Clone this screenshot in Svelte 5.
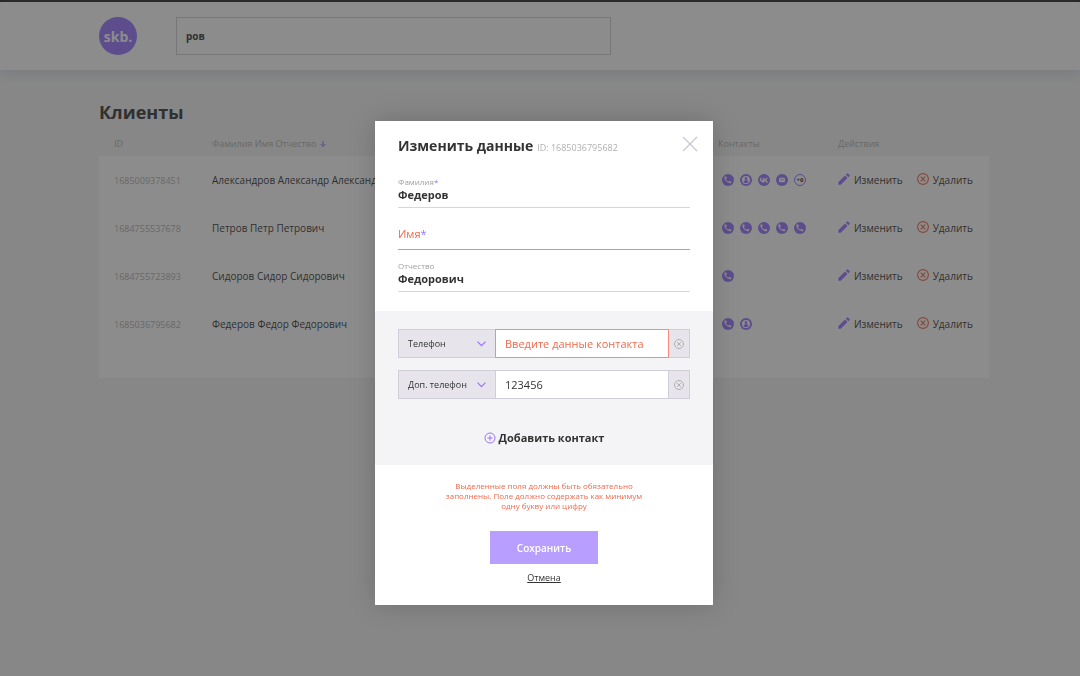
<script>
  let query = $state('ров');
  let surname = $state('Федеров');
  let firstName = $state('');
  let patronymic = $state('Федорович');

  const contactTypes = ['Телефон', 'Доп. телефон', 'Email', 'Vk'];
  let contacts = $state([
    { id: 1, type: 'Телефон', value: '' },
    { id: 2, type: 'Доп. телефон', value: '123456' }
  ]);

  const clients = [
    { id: '1685009378451', name: 'Александров Александр Александрович', contacts: ['phone', 'user', 'vk', 'mail'], more: '+6' },
    { id: '1684755537678', name: 'Петров Петр Петрович', contacts: ['phone', 'phone', 'phone', 'phone', 'phone'] },
    { id: '1684755723893', name: 'Сидоров Сидор Сидорович', contacts: ['phone'] },
    { id: '1685036795682', name: 'Федеров Федор Федорович', contacts: ['phone', 'user'] }
  ];
</script>

{#snippet contactIcon(kind)}
  <svg class="contact-icon" viewBox="0 0 16 16" aria-hidden="true">
    {#if kind === 'phone'}
      <circle cx="8" cy="8" r="8" fill="#9873ff" />
      <path fill="#fff" d="M11.56 9.5c-.62 0-1.21-.1-1.77-.28a.5.5 0 0 0-.5.12l-.79.99a7.5 7.5 0 0 1-3.43-3.4l.98-.83a.5.5 0 0 0 .12-.5A5.6 5.6 0 0 1 5.9 3.83.5.5 0 0 0 5.4 3.33H3.66c-.27 0-.6.12-.6.5 0 4.6 3.83 8.4 8.4 8.4.35 0 .6-.31.6-.59V10a.5.5 0 0 0-.5-.5Z" />
    {:else if kind === 'user'}
      <circle cx="8" cy="8" r="8" fill="#9873ff" />
      <circle cx="8" cy="8" r="5.4" fill="#fff" />
      <circle cx="8" cy="6.2" r="1.8" fill="#9873ff" />
      <path fill="#9873ff" d="M4.700 10.300c0-1.300 2.200-1.900 3.300-1.900s3.300.6 3.300 1.900c-.7 1-1.900 1.700-3.300 1.700s-2.600-.7-3.300-1.700Z" />
    {:else if kind === 'vk'}
      <circle cx="8" cy="8" r="8" fill="#9873ff" />
      <path fill="#fff" d="M7.900 11.500C4.400 11.500 2.300 9 2.200 4.900h2c.1 2.600 1.200 3.600 2.100 3.900V4.900h2.200v2.300c1-.1 2-1.200 2.300-2.300h2c-.3 1.500-1.300 2.500-2 3 .7.400 1.900 1.300 2.400 3.600h-2.200c-.4-1.100-1.300-2-2.500-2.200v2.200h-.6Z" />
    {:else}
      <circle cx="8" cy="8" r="8" fill="#9873ff" />
      <path fill="#fff" fill-rule="evenodd" d="M5 5h6c.6 0 1 .4 1 1v4c0 .6-.4 1-1 1H5c-.6 0-1-.4-1-1V6c0-.6.4-1 1-1Zm0 1v.7l3 1.800 3-1.800V6L8 7.600 5 6Z" />
    {/if}
  </svg>
{/snippet}

{#snippet crossCircle(cls)}
  <svg class={cls} viewBox="0 0 12 12" aria-hidden="true">
    <circle cx="6" cy="6" r="5.400" />
    <path d="m3.700 3.700 4.600 4.600m0-4.600L3.700 8.300" />
  </svg>
{/snippet}

<div class="page">
  <header class="header">
    <a class="logo" href="#top">skb.</a>
    <input class="search" type="text" aria-label="Поиск" bind:value={query} />
  </header>

  <main class="main">
    <h1>Клиенты</h1>
    <div class="table-wrap">
      <table>
        <colgroup>
          <col class="col-id" />
          <col />
          <col class="col-contacts" />
          <col class="col-actions" />
        </colgroup>
        <thead>
          <tr>
            <th scope="col">ID</th>
            <th scope="col">
              Фамилия Имя Отчество
              <svg class="sort" viewBox="0 0 8 8" aria-hidden="true"><path d="M4 1v5.500M1.500 4 4 6.500 6.500 4" /></svg>
            </th>
            <th scope="col">Контакты</th>
            <th scope="col">Действия</th>
          </tr>
        </thead>
        <tbody>
          {#each clients as client (client.id)}
            <tr>
              <td class="id">{client.id}</td>
              <td class="name">{client.name}</td>
              <td>
                <div class="contacts">
                  {#each client.contacts as kind}
                    {@render contactIcon(kind)}
                  {/each}
                  {#if client.more}
                    <button class="more" type="button">{client.more}</button>
                  {/if}
                </div>
              </td>
              <td>
                <div class="actions">
                  <button class="action" type="button">
                    <svg class="pencil" viewBox="0 0 12 12" aria-hidden="true">
                      <path d="M.3 9.200v2.500h2.500l6.700-6.700L7 2.500.3 9.200ZM11.600 2.900a.6.6 0 0 0 0-.9L10 .4a.6.6 0 0 0-.9 0L7.800 1.700l2.500 2.500 1.300-1.300Z" />
                    </svg>
                    <span>Изменить</span>
                  </button>
                  <button class="action" type="button">
                    {@render crossCircle('cancel')}
                    <span>Удалить</span>
                  </button>
                </div>
              </td>
            </tr>
          {/each}
        </tbody>
      </table>
    </div>
  </main>
</div>

<div class="overlay">
  <form class="modal" aria-labelledby="modal-title" onsubmit={(e) => e.preventDefault()}>
    <div class="modal-head">
      <h2 id="modal-title">Изменить данные</h2>
      <span class="modal-id">ID: 1685036795682</span>
      <button class="close" type="button" aria-label="Закрыть">
        <svg viewBox="0 0 16 16" aria-hidden="true"><path d="m1 1 14 14M15 1 1 15" /></svg>
      </button>
    </div>

    <div class="fields">
      <div class="field">
        <label for="surname">Фамилия<b>*</b></label>
        <input id="surname" type="text" bind:value={surname} />
      </div>
      <div class="field invalid">
        <label for="first-name">Имя<b>*</b></label>
        <input id="first-name" type="text" bind:value={firstName} />
      </div>
      <div class="field">
        <label for="patronymic">Отчество</label>
        <input id="patronymic" type="text" bind:value={patronymic} />
      </div>
    </div>

    <div class="contact-section">
      {#each contacts as contact (contact.id)}
        <div class="contact-row">
          <div class="select">
            <select aria-label="Тип контакта" bind:value={contact.type}>
              {#each contactTypes as type}
                <option value={type}>{type}</option>
              {/each}
            </select>
            <svg class="chevron" viewBox="0 0 9 6" aria-hidden="true"><path d="m.5.7 4 4 4-4" /></svg>
          </div>
          <input
            type="text"
            class:empty={!contact.value}
            aria-label="Контакт"
            placeholder="Введите данные контакта"
            bind:value={contact.value}
          />
          <button class="remove" type="button" aria-label="Удалить контакт">
            {@render crossCircle('remove-icon')}
          </button>
        </div>
      {/each}
      <button class="add" type="button">
        <svg viewBox="0 0 12 12" aria-hidden="true"><circle cx="6" cy="6" r="5" /><path d="M6 3.500v5M3.500 6h5" /></svg>
        <span>Добавить контакт</span>
      </button>
    </div>

    <div class="modal-foot">
      <p class="error">Выделенные поля должны быть обязательно заполнены. Поле должно содержать как минимум одну букву или цифру</p>
      <button class="save" type="submit">Сохранить</button>
      <button class="dismiss" type="button">Отмена</button>
    </div>
  </form>
</div>

<style>
  :global(body) {
    background: #f4f4f4;
    color: #333;
    font-family: 'Open Sans', 'Noto Sans', sans-serif;
    font-size: 10px;
  }
  :global(*) {
    box-sizing: border-box;
  }
  button,
  input,
  select {
    margin: 0;
    padding: 0;
    border: 0;
    border-radius: 0;
    background: none;
    color: inherit;
    font: inherit;
    outline: none;
  }
  button {
    cursor: pointer;
  }
  svg {
    display: block;
    flex: none;
  }
  .page {
    min-height: 100vh;
    border-top: 2px solid #1c1c1c;
  }
  .header {
    display: flex;
    align-items: center;
    gap: 39px;
    padding: 15px 91px 15px 99px;
    background: #fff;
    box-shadow: 0 4px 12px rgba(160, 176, 190, 0.4);
  }
  .logo {
    display: grid;
    place-items: center;
    width: 38px;
    height: 38px;
    border-radius: 50%;
    background: #9873ff;
    color: #fff;
    font-size: 14px;
    font-weight: 700;
    text-decoration: none;
  }
  .search {
    flex: 0 1 435px;
    min-width: 0;
    height: 38px;
    padding: 0 9px;
    border: 1px solid #d0d0d4;
    font-weight: 700;
  }
  .main {
    padding: 30px 91px 40px 99px;
  }
  h1 {
    margin: 0;
    font-size: 18px;
    line-height: 24px;
    font-weight: 700;
  }
  .table-wrap {
    margin-top: 8px;
    padding-bottom: 30px;
    background: #fff;
  }
  table {
    width: 100%;
    table-layout: fixed;
    border-collapse: collapse;
  }
  .col-id {
    width: 113px;
  }
  .col-contacts {
    width: 120px;
  }
  .col-actions {
    width: 151px;
  }
  th,
  td {
    padding: 0;
    text-align: left;
    white-space: nowrap;
  }
  th:first-child,
  td:first-child {
    padding-left: 15px;
  }
  thead {
    background: #f4f4f4;
  }
  th {
    height: 24px;
    padding-bottom: 2px;
    color: #b0b0b0;
    font-size: 9px;
    font-weight: 400;
  }
  .sort {
    display: inline-block;
    width: 8px;
    height: 8px;
    vertical-align: -1px;
    fill: none;
    stroke: #9873ff;
  }
  td {
    height: 48px;
  }
  .id {
    color: #b0b0b0;
    font-size: 9px;
  }
  .name {
    overflow: hidden;
  }
  .contacts {
    display: flex;
    gap: 6px;
    padding-left: 4px;
  }
  .contact-icon {
    width: 12px;
    height: 12px;
  }
  .more {
    display: grid;
    place-items: center;
    width: 12px;
    height: 12px;
    border: 1px solid #9873ff;
    border-radius: 50%;
    font-size: 6px;
    line-height: 8px;
    font-weight: 700;
  }
  .actions {
    display: flex;
    gap: 14px;
  }
  .action {
    display: flex;
    align-items: center;
    gap: 4px;
    line-height: 14px;
  }
  .action svg {
    width: 12px;
    height: 12px;
    margin-bottom: 3px;
  }
  .pencil {
    fill: #9873ff;
  }
  .cancel {
    fill: none;
    stroke: #f06a4d;
    stroke-width: 1.2;
  }

  .overlay {
    position: fixed;
    inset: 0;
    display: flex;
    align-items: flex-start;
    justify-content: center;
    padding: 121px 0 40px 8px;
    overflow: auto;
    background: rgba(46, 46, 46, 0.55);
  }
  .modal {
    width: 338px;
    max-width: 100%;
    background: #fff;
    box-shadow: 0 0 26px rgba(0, 0, 0, 0.18);
  }
  .modal-head {
    display: flex;
    align-items: baseline;
    gap: 4px;
    padding: 15px 15px 0 23px;
  }
  h2 {
    margin: 0;
    font-size: 14px;
    line-height: 20px;
    font-weight: 700;
  }
  .modal-id {
    color: #b0b0b0;
    font-size: 9px;
  }
  .close {
    align-self: flex-start;
    margin-left: auto;
  }
  .close svg {
    width: 16px;
    height: 16px;
    fill: none;
    stroke: #c8c5d1;
    stroke-width: 1.2;
  }
  .fields {
    display: grid;
    gap: 10px;
    padding: 20px 23px 19px;
  }
  .field {
    display: flex;
    flex-direction: column;
    height: 32px;
    border-bottom: 1px solid #d6d6dc;
  }
  .field label {
    color: #a0a0a0;
    font-size: 8px;
    line-height: 11px;
  }
  .field label b {
    color: #9873ff;
    font-weight: 400;
  }
  .field input {
    width: 100%;
    height: 15px;
    font-size: 11px;
    font-weight: 700;
  }
  .field.invalid {
    display: grid;
    border-color: #ff8080;
  }
  .field.invalid label,
  .field.invalid input {
    grid-area: 1 / 1;
  }
  .field.invalid label {
    color: #f06a4d;
    font-size: 11px;
    line-height: 31px;
  }
  .contact-section {
    display: flex;
    flex-direction: column;
    gap: 12px;
    padding: 18px 23px;
    background: #f4f3f6;
  }
  .contact-row {
    display: flex;
    height: 29px;
  }
  .select {
    display: grid;
    flex: 0 0 97px;
    align-items: center;
    border: 1px solid #d0ced8;
    border-right: 0;
    background: #e7e5eb;
  }
  .select select {
    grid-area: 1 / 1;
    width: 100%;
    height: 100%;
    padding-left: 9px;
    appearance: none;
    font-size: 9px;
  }
  .chevron {
    grid-area: 1 / 1;
    justify-self: end;
    width: 9px;
    height: 6px;
    margin-right: 9px;
    pointer-events: none;
    fill: none;
    stroke: #9873ff;
    stroke-width: 1.2;
  }
  .contact-row input {
    flex: 1;
    min-width: 0;
    padding: 0 9px;
    border: 1px solid #d0ced8;
    background: #fff;
    font-size: 11px;
  }
  .contact-row input.empty {
    border-color: #f78d7c;
  }
  .contact-row input::placeholder {
    color: #f06a4d;
    opacity: 1;
  }
  .remove {
    display: grid;
    place-items: center;
    flex: 0 0 21px;
    border: 1px solid #d0ced8;
    border-left: 0;
    background: #e7e5eb;
  }
  .remove-icon {
    width: 10px;
    height: 10px;
    fill: none;
    stroke: #b0b0b0;
    stroke-width: 1.2;
  }
  .add {
    display: flex;
    align-items: center;
    align-self: center;
    gap: 3px;
    margin: 19px 0 2px;
    font-size: 11px;
    line-height: 15px;
    font-weight: 700;
  }
  .add svg {
    width: 12px;
    height: 12px;
    fill: none;
    stroke: #9873ff;
  }
  .modal-foot {
    display: flex;
    flex-direction: column;
    align-items: center;
    padding: 16px 23px 21px;
  }
  .error {
    max-width: 200px;
    margin: 0 0 20px;
    color: #f06a4d;
    font-size: 8px;
    line-height: 10px;
    text-align: center;
  }
  .save {
    width: 108px;
    height: 33px;
    background: #b89eff;
    color: #fff;
    font-weight: 600;
  }
  .dismiss {
    margin-top: 7px;
    font-size: 9px;
    line-height: 13px;
    text-decoration: underline;
  }
</style>
